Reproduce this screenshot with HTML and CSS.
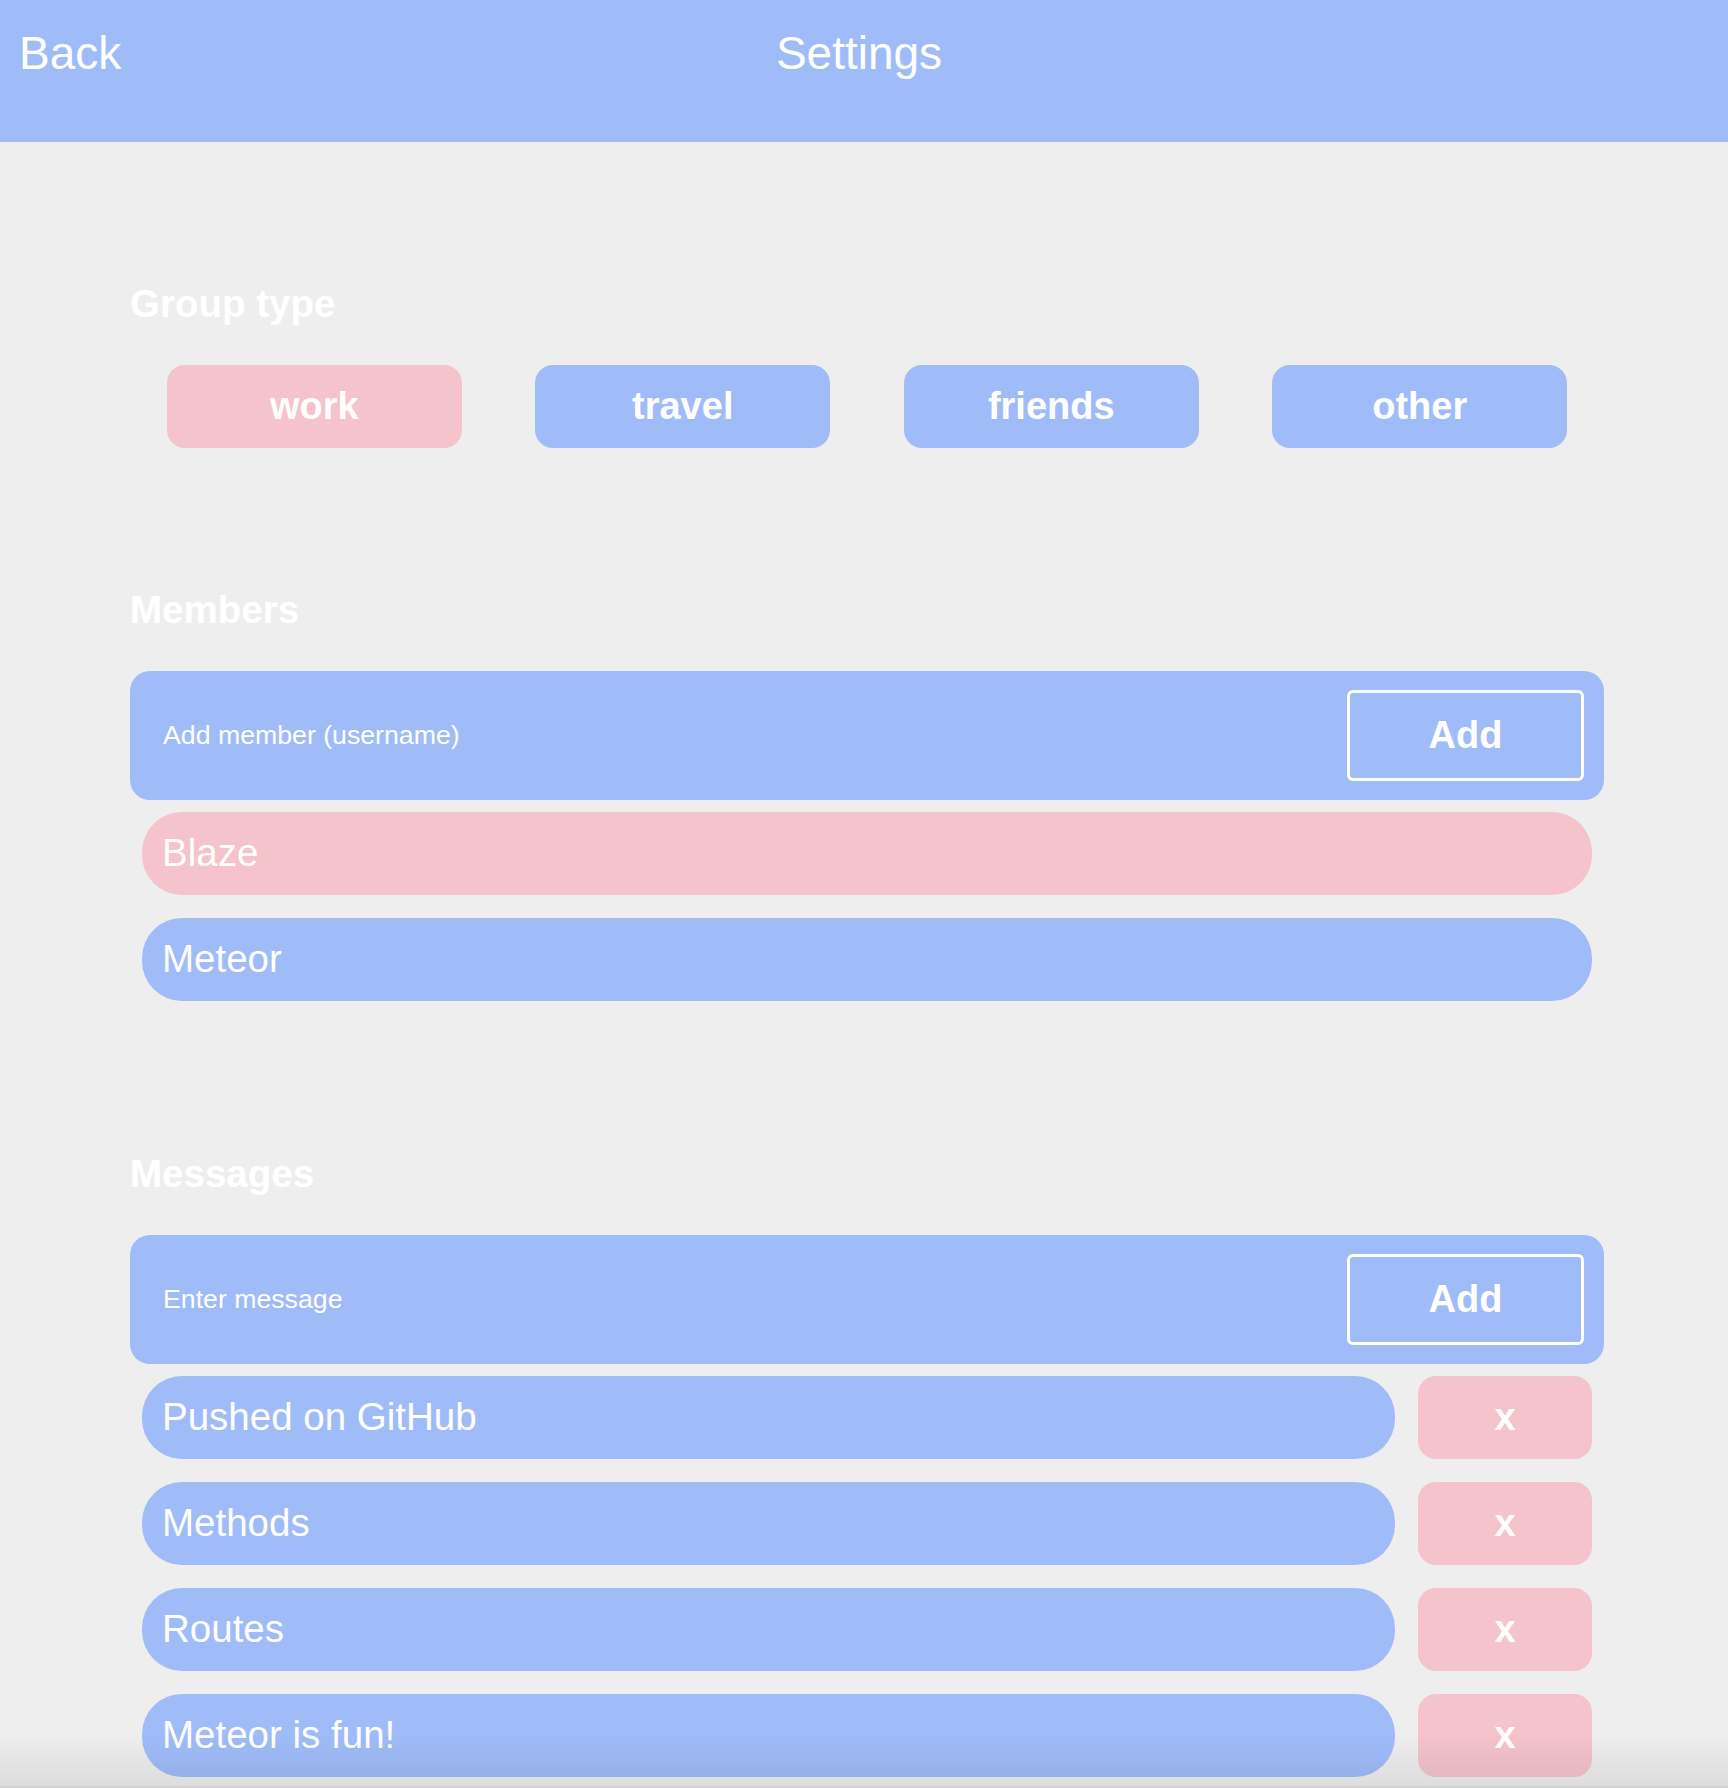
FILE: index.html
```html
<!DOCTYPE html>
<html lang="en">
<head>
<meta charset="utf-8">
<title>Settings</title>
<link rel="stylesheet" href="styles.css">
</head>
<body>
<header class="topbar">
  <a class="back" href="#">Back</a>
  <h1 class="title">Settings</h1>
  <span class="spacer"></span>
</header>
<main class="content">
  <section class="section">
    <h2 class="section-title">Group type</h2>
    <div class="types">
      <div class="type-cell"><button class="type-btn pink">work</button></div>
      <div class="type-cell"><button class="type-btn blue">travel</button></div>
      <div class="type-cell"><button class="type-btn blue">friends</button></div>
      <div class="type-cell"><button class="type-btn blue">other</button></div>
    </div>
  </section>
  <section class="section">
    <h2 class="section-title">Members</h2>
    <form class="add-box">
      <input class="add-input" type="text" placeholder="Add member (username)">
      <button class="add-btn" type="button">Add</button>
    </form>
    <div class="list">
      <div class="row pink">Blaze</div>
      <div class="row blue">Meteor</div>
    </div>
  </section>
  <section class="section">
    <h2 class="section-title">Messages</h2>
    <form class="add-box">
      <input class="add-input" type="text" placeholder="Enter message">
      <button class="add-btn" type="button">Add</button>
    </form>
    <div class="list">
      <div class="msg-item"><div class="msg blue">Pushed on GitHub</div><button class="del-btn">x</button></div>
      <div class="msg-item"><div class="msg blue">Methods</div><button class="del-btn">x</button></div>
      <div class="msg-item"><div class="msg blue">Routes</div><button class="del-btn">x</button></div>
      <div class="msg-item"><div class="msg blue">Meteor is fun!</div><button class="del-btn">x</button></div>
    </div>
  </section>
</main>
<div class="bottom-shade"></div>
</body>
</html>
```
FILE: styles.css
```css
html, body {
  margin: 0;
  padding: 0;
  background: #eeeeee;
  font-family: "Liberation Sans", Arial, Helvetica, sans-serif;
  color: #ffffff;
}

.topbar {
  height: 142px;
  background: #a0bcf8;
  display: grid;
  grid-template-columns: 1fr auto 1fr;
  align-items: start;
  padding-right: 10px;
}

.back {
  color: #ffffff;
  text-decoration: none;
  font-size: 46px;
  line-height: 52px;
  padding-left: 19px;
  padding-top: 27px;
  justify-self: start;
}

.title {
  margin: 0;
  font-weight: normal;
  font-size: 46px;
  line-height: 52px;
  padding-top: 27px;
}

.content {
  padding: 140px 124px 0 130px;
}

.section + .section {
  margin-top: 140px;
}

.section-title {
  margin: 0 0 39px 0;
  font-size: 38.5px;
  line-height: 44px;
  font-weight: bold;
  color: #ffffff;
}

.types {
  display: grid;
  grid-template-columns: repeat(4, 1fr);
}

.type-cell {
  display: flex;
  justify-content: center;
}

.type-btn {
  width: 80%;
  height: 83px;
  border: none;
  border-radius: 18px;
  font-family: inherit;
  font-size: 38px;
  font-weight: bold;
  color: #ffffff;
  padding: 0;
}

.pink { background: #f4c3cb; }
.blue { background: #a0bcf8; }

.add-box {
  display: flex;
  align-items: center;
  height: 129px;
  box-sizing: border-box;
  padding: 19px 20px 19px 20px;
  background: #a0bcf8;
  border-radius: 20px;
  margin: 0;
}

.add-input {
  flex: 1;
  border: none;
  background: transparent;
  outline: none;
  font-family: inherit;
  font-size: 26.7px;
  color: #ffffff;
  padding: 0 0 0 13px;
  margin: 0;
}

.add-input::placeholder {
  color: #ffffff;
  opacity: 1;
}

.add-btn {
  width: 237px;
  height: 91px;
  box-sizing: border-box;
  border: 3px solid #ffffff;
  border-radius: 6px;
  background: transparent;
  font-family: inherit;
  font-size: 38px;
  font-weight: bold;
  color: #ffffff;
  padding: 0;
}

.list {
  display: flex;
  flex-direction: column;
}

.row {
  height: 83px;
  margin: 11.5px 12px 11.5px 11.5px;
  border-radius: 40px;
  display: flex;
  align-items: center;
  padding-left: 20.5px;
  font-size: 38.5px;
}

.msg-item {
  display: flex;
  height: 83px;
  margin: 11.5px 12px 11.5px 11.5px;
}

.msg {
  flex: 1;
  border-radius: 40px;
  display: flex;
  align-items: center;
  padding-left: 20.5px;
  font-size: 38.5px;
}

.del-btn {
  width: 174px;
  margin-left: 23px;
  border: none;
  border-radius: 18px;
  background: #f4c3cb;
  font-family: inherit;
  font-size: 38px;
  font-weight: bold;
  color: #ffffff;
  padding: 0;
}

.bottom-shade {
  position: fixed;
  left: 0;
  right: 0;
  bottom: 0;
  height: 52px;
  pointer-events: none;
  background: linear-gradient(to bottom, rgba(0, 0, 0, 0), rgba(0, 0, 0, 0.07));
  border-bottom: 2px solid rgba(0, 0, 0, 0.12);
}
```
